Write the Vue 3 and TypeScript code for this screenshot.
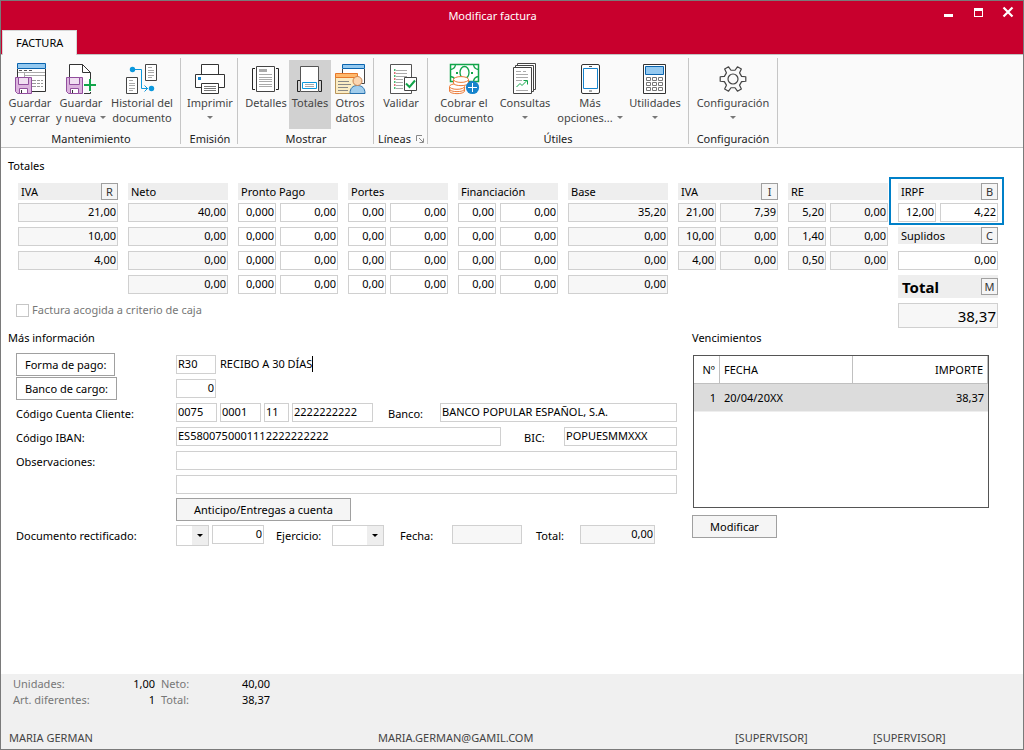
<script setup lang="ts">
import { ref } from 'vue'

interface RibbonItem {
  icon: string
  lines: string[]
  width: string
  arrow?: 'inline' | 'below'
  active?: boolean
}
interface RibbonGroup {
  title: string
  items: RibbonItem[]
  launcher?: boolean
}
interface TotalsColumn {
  title: string
  key?: string
  readonly: boolean
  rows: string[][]
}

const groups: RibbonGroup[] = [
  {
    title: 'Mantenimiento',
    items: [
      { icon: 'saveClose', lines: ['Guardar', 'y cerrar'], width: 'w50' },
      { icon: 'saveNew', lines: ['Guardar', 'y nueva'], width: 'w52', arrow: 'inline' },
      { icon: 'history', lines: ['Historial del', 'documento'], width: 'w70' },
    ],
  },
  { title: 'Emisión', items: [{ icon: 'printer', lines: ['Imprimir'], width: 'w54', arrow: 'below' }] },
  {
    title: 'Mostrar',
    items: [
      { icon: 'details', lines: ['Detalles'], width: 'w46' },
      { icon: 'totals', lines: ['Totales'], width: 'w42', active: true },
      { icon: 'other', lines: ['Otros', 'datos'], width: 'w38' },
    ],
  },
  { title: 'Líneas', launcher: true, items: [{ icon: 'validate', lines: ['Validar'], width: 'w50' }] },
  {
    title: 'Útiles',
    items: [
      { icon: 'cash', lines: ['Cobrar el', 'documento'], width: 'w64' },
      { icon: 'queries', lines: ['Consultas'], width: 'w58', arrow: 'below' },
      { icon: 'phone', lines: ['Más', 'opciones...'], width: 'w72', arrow: 'inline' },
      { icon: 'calculator', lines: ['Utilidades'], width: 'w58', arrow: 'below' },
    ],
  },
  { title: 'Configuración', items: [{ icon: 'gear', lines: ['Configuración'], width: 'w84', arrow: 'below' }] },
]

const pair = (a: string[]) => a.map((v) => [v, '0,00'])

const columns: TotalsColumn[] = [
  { title: 'IVA', key: 'R', readonly: true, rows: [['21,00'], ['10,00'], ['4,00']] },
  { title: 'Neto', readonly: true, rows: [['40,00'], ['0,00'], ['0,00'], ['0,00']] },
  { title: 'Pronto Pago', readonly: false, rows: pair(['0,000', '0,000', '0,000', '0,000']) },
  { title: 'Portes', readonly: false, rows: pair(['0,00', '0,00', '0,00', '0,00']) },
  { title: 'Financiación', readonly: false, rows: pair(['0,00', '0,00', '0,00', '0,00']) },
  { title: 'Base', readonly: true, rows: [['35,20'], ['0,00'], ['0,00'], ['0,00']] },
  { title: 'IVA', key: 'I', readonly: true, rows: [['21,00', '7,39'], ['10,00', '0,00'], ['4,00', '0,00']] },
  { title: 'RE', readonly: true, rows: pair(['5,20', '1,40', '0,50']) },
]

function gearPath(): string {
  const teeth = 6
  const profile: [number, number][] = [[-17, 9], [-10, 13], [10, 13], [17, 9]]
  const points: string[] = []
  for (let i = 0; i < teeth; i++) {
    for (const [offset, radius] of profile) {
      const a = ((i * 60 + offset) * Math.PI) / 180
      points.push(`${(16 + radius * Math.cos(a)).toFixed(2)} ${(16 + radius * Math.sin(a)).toFixed(2)}`)
    }
  }
  return `M${points.join('L')}Z`
}
const gear = gearPath()

const cashBasis = ref(false)
const payment = ref('R30')
const chargeBank = ref('0')
const account = ref(['0075', '0001', '11', '2222222222'])
const iban = ref('ES5800750001112222222222')
const bank = ref('BANCO POPULAR ESPAÑOL, S.A.')
const bic = ref('POPUESMMXXX')
const notes = ref(['', ''])
</script>

<template>
  <div class="window">
    <header class="titlebar">
      <div class="caption">
        <h1>Modificar factura</h1>
        <div class="controls">
          <button type="button" aria-label="Minimizar">
            <svg width="12" height="12" viewBox="0 0 12 12"><path d="M2 8H11V11H2Z" fill="#fff" /></svg>
          </button>
          <button type="button" aria-label="Maximizar">
            <svg width="12" height="12" viewBox="0 0 12 12"><path d="M2 2H11V11H2ZM3 5V10H10V5Z" fill="#fff" fill-rule="evenodd" /></svg>
          </button>
          <button type="button" aria-label="Cerrar">
            <svg width="12" height="12" viewBox="0 0 12 12"><path d="M1.500 1.500L10.500 10.500M10.500 1.500L1.500 10.500" stroke="#fff" stroke-width="2.200" /></svg>
          </button>
        </div>
      </div>
      <nav class="tabs"><button type="button" class="tab">FACTURA</button></nav>
    </header>

    <div class="ribbon">
      <section v-for="g in groups" :key="g.title" class="group">
        <div class="items">
          <button v-for="it in g.items" :key="it.icon" type="button" class="item" :class="[it.width, { active: it.active }]">
            <svg class="icon" width="32" height="32" viewBox="0 0 32 32" fill="none" aria-hidden="true">
              <template v-if="it.icon === 'saveClose'">
                <path d="M3.500 6V28.500H31.500V6" fill="#fff" stroke="#333" />
                <path d="M3.500.5H31.500V5.500H3.500Z" fill="#94c9f0" stroke="#0a64ae" />
                <path d="M5 7.500H8M10 7.500H13M15 7.500H18" stroke="#555" />
                <path d="M4 9.500H31M10.500 10V14M11 12.500H31" stroke="#aaa" />
                <path d="M18 17.500H22M23 17.500H26M27 17.500H29M18 20.500H22M23 20.500H26M27 20.500H29M18 23.500H22M23 23.500H26M27 23.500H29" stroke="#999" />
              </template>
              <template v-if="it.icon === 'saveNew'">
                <path d="M5 14V2H17.500L25 9.500V18H19V30H18V14Z" fill="#fff" />
                <path d="M4.500 14V1.500H17.500L25.500 9.500V16M25.500 29V30.500H19" stroke="#333" />
                <path d="M17.500 1.500V9.500H25.500" stroke="#333" />
                <path d="M25 16V28M19 22H31" stroke="#12a54a" stroke-width="2" />
              </template>
              <template v-if="it.icon === 'saveClose' || it.icon === 'saveNew'">
                <path d="M1.500 14.500H17.500V30.500H3.500L1.500 28.500Z" fill="#dcb4de" stroke="#924f9e" />
                <path d="M4.500 14.500H14.500V21.500H4.500Z" fill="#f1dff2" stroke="#924f9e" />
                <path d="M5.500 25.500H13.500V30.500H5.500Z" fill="#fff" stroke="#924f9e" />
                <path d="M7.500 27V30" stroke="#333" />
              </template>
              <template v-if="it.icon === 'history'">
                <path d="M19.500 1.500H30.500V17.500H19.500ZM.5 14.500H11.500V30.500H.5Z" fill="#fff" stroke="#444" />
                <path d="M22 4.500H26M22 7.500H28M22 9.500H28M22 12.500H28M22 14.500H26M3 17.500H7M3 20.500H9M3 22.500H9M3 25.500H9M3 27.500H7" stroke="#aaa" />
                <path d="M7 6.500H15.500V25.500H22M18.500 22.500L21.500 25.500L18.500 28.500" stroke="#0b98dd" />
                <circle cx="6.500" cy="6.500" r="2.700" fill="#0b98dd" /><circle cx="25.500" cy="25.500" r="2.700" fill="#0b98dd" />
              </template>
              <template v-if="it.icon === 'printer'">
                <path d="M7.500 1.500H24.500V12H7.500Z" fill="#fff" stroke="#333" />
                <path d="M1.500 11.500H30.500V24.500H1.500Z" fill="#fff" stroke="#333" />
                <path d="M7.500 20.500H24.500V30.500H7.500Z" fill="#fff" stroke="#333" />
                <path d="M10 23.500H22M10 25.500H22M10 27.500H22" stroke="#777" />
                <path d="M4 14H7V17H4Z" fill="#1583cc" />
              </template>
              <template v-if="it.icon === 'details'">
                <path d="M6.500 3.500H24.500V28.500H6.500Z" fill="#fff" stroke="#444" />
                <path d="M9 6H17V9H9Z" fill="#aaa" />
                <path d="M9 11.500H22M9 14.500H22M9 16.500H22M9 18.500H22M9 21.500H22M9 23.500H22" stroke="#aaa" />
                <path d="M5 5.500H2.500V26.500H5M26 5.500H28.500V26.500H26" stroke="#222" />
              </template>
              <template v-if="it.icon === 'totals'">
                <path d="M6.500 3.500H24.500V28.500H6.500Z" fill="#fff" stroke="#555" />
                <path d="M8.500 19.500H22.500V25.500H8.500Z" fill="#fff" stroke="#0b98dd" />
                <path d="M11 21.500H20M11 23.500H20" stroke="#aaa" />
                <path d="M6 17.500H3.500V28.500H6M25 17.500H27.500V28.500H25" stroke="#222" />
              </template>
              <template v-if="it.icon === 'other'">
                <path d="M8.500 6V20.500H30.500V6" fill="#fff" stroke="#444" />
                <path d="M8.500 1.500H30.500V5.500H8.500Z" fill="#94c9f0" stroke="#0a64ae" />
                <path d="M1.500 14V30.500H23.500V14" fill="#faecc4" stroke="#b8945a" />
                <path d="M1.500 10.500H23.500V14.500H1.500Z" fill="#ffb96c" stroke="#e7782a" />
                <path d="M4 18.500H15M4 21.500H17M4 24.500H14M4 27.500H14" stroke="#888" />
                <path d="M16 30.500C16 25 19 22.500 23.500 22.500S31 25 31 30.500Z" fill="#a1cdec" stroke="#2670ad" />
                <circle cx="23.500" cy="18" r="4.500" fill="#fbd6b1" stroke="#ca8451" />
              </template>
              <template v-if="it.icon === 'validate'">
                <path d="M5.500 1.500H26.500V30.500H5.500Z" fill="#fff" stroke="#555" />
                <path d="M11 7.500H22M11 10.500H22M11 13.500H22M11 16.500H18M11 19.500H18M11 22.500H18M11 25.500H18" stroke="#aaa" />
                <path d="M9 7H10.500M9 13H10.500M9 19H10.500M9 25H10.500" stroke="#12a54a" stroke-width="1.500" />
                <path d="M9 10H10.500M9 16H10.500M9 22H10.500" stroke="#d43d48" stroke-width="1.500" />
                <path d="M19.500 14.500H31.500V27.500H19.500Z" fill="#fff" stroke="#444" />
                <path d="M21 20.500L24.500 24L30 17.500" stroke="#12a54a" stroke-width="2" />
              </template>
              <template v-if="it.icon === 'cash'">
                <path d="M2.500 1.500H30.500V18.500H2.500Z" fill="#fff" stroke="#12a54a" stroke-width="1.500" />
                <path d="M2.500 6.500Q7 6 7.500 1.500M30.500 6.500Q26 6 25.500 1.500M30.500 13.500Q26 14 25.500 18.500M2.500 13.500Q6 14 6.500 16" stroke="#12a54a" stroke-width="1.300" />
                <ellipse cx="16.500" cy="9.500" rx="4.500" ry="6" stroke="#12a54a" stroke-width="1.300" />
                <path d="M8 9H10V11H8ZM23 9H25V11H23Z" fill="#12a54a" />
                <g fill="#fff" stroke="#ec7b39">
                  <path d="M1.500 24V28C1.500 31.500 16.500 31.500 16.500 28V24" />
                  <path d="M1.500 26C1.500 29.500 16.500 29.500 16.500 26" />
                  <ellipse cx="9" cy="23.500" rx="7.500" ry="2.800" />
                  <path d="M5.500 16.500V20C5.500 23.500 20.500 23.500 20.500 20V16.500" />
                  <ellipse cx="13" cy="16.500" rx="7.500" ry="2.900" />
                </g>
                <circle cx="24.500" cy="24.500" r="6.600" fill="#1583cc" />
                <path d="M24.500 20V29M20 24.500H29" stroke="#fff" />
              </template>
              <template v-if="it.icon === 'queries'">
                <g fill="#fff" stroke="#444">
                  <path d="M8.500.5H26.500V26.500H8.500Z" />
                  <path d="M6.500 2.500H24.500V28.500H6.500Z" />
                  <path d="M4.500 4.500H22.500V30.500H4.500Z" />
                </g>
                <path d="M7 8.500H12M14 8.500H17M7 11.500H19M7 14.500H19M7 17.500H13M7 27.500H19" stroke="#aaa" />
                <path d="M7.500 24L11 20.500L13 22.500L17.500 18M14.500 17.500H18.500V21.500" stroke="#12a54a" />
              </template>
              <template v-if="it.icon === 'phone'">
                <rect x="7.500" y="1.500" width="18" height="29" rx="1.500" fill="#fff" stroke="#333" />
                <path d="M9.500 5.500H23.500V25.500H9.500Z" fill="#fff" stroke="#1583cc" />
                <path d="M15 3.500H18M15 28H18" stroke="#555" />
              </template>
              <template v-if="it.icon === 'calculator'">
                <path d="M4.500 1.500H26.500V30.500H4.500Z" fill="#fff" stroke="#333" />
                <path d="M6.500 3.500H24.500V11.500H6.500Z" fill="#94c9f0" stroke="#0a64ae" />
                <path v-for="n in 9" :key="n" :d="`M${7.5 + ((n - 1) % 3) * 6} ${14.5 + Math.floor((n - 1) / 3) * 5}h4v3h-4z`" stroke="#777" />
              </template>
              <template v-if="it.icon === 'gear'">
                <path :d="gear" stroke="#444" stroke-width="1.200" stroke-linejoin="round" />
                <circle cx="16" cy="16" r="5" stroke="#444" stroke-width="1.200" />
              </template>
            </svg>
            <span v-for="(l, i) in it.lines" :key="l" class="line">{{ l }}<i v-if="it.arrow === 'inline' && i === 1" class="caret inline"></i></span>
            <span v-if="it.arrow === 'below'" class="line"><i class="caret"></i></span>
          </button>
        </div>
        <div class="group-title">
          {{ g.title }}
          <svg v-if="g.launcher" width="8" height="8" viewBox="0 0 8 8" fill="none"><path d="M.5 6V.5H6M3 3L7 7M7.500 3.500V7.500H3.500" stroke="#888" /></svg>
        </div>
      </section>
    </div>

    <main class="body">
      <h2>Totales</h2>
      <div class="totals">
        <div v-for="(c, ci) in columns" :key="ci" class="col">
          <div class="head"><span>{{ c.title }}</span><button v-if="c.key" type="button" class="key">{{ c.key }}</button></div>
          <div v-for="(r, ri) in c.rows" :key="ri" class="cells" :class="{ double: r.length === 2 }">
            <input v-for="(v, vi) in r" :key="vi" class="field num" type="text" :value="v" :readonly="c.readonly" :aria-label="`${c.title} ${ri + 1}`" />
          </div>
        </div>
        <div class="col">
          <div class="irpf">
            <div class="head"><span>IRPF</span><button type="button" class="key">B</button></div>
            <div class="cells double">
              <input class="field num" type="text" value="12,00" aria-label="Porcentaje IRPF" />
              <input class="field num" type="text" value="4,22" aria-label="Importe IRPF" />
            </div>
          </div>
          <div class="head spaced"><label for="suplidos">Suplidos</label><button type="button" class="key">C</button></div>
          <div class="cells"><input id="suplidos" class="field num" type="text" value="0,00" /></div>
          <div class="head grand"><label for="total">Total</label><button type="button" class="key">M</button></div>
          <input id="total" class="field num grand-value" type="text" value="38,37" readonly />
        </div>
        <label class="check"><input v-model="cashBasis" type="checkbox" />Factura acogida a criterio de caja</label>
      </div>

      <div class="lower">
        <section>
          <h2>Más información</h2>
          <div class="form">
            <div class="row">
              <div class="lead"><button type="button" class="btn plain">Forma de pago:</button></div>
              <input v-model="payment" class="field f40" type="text" aria-label="Forma de pago" />
              <span class="typed">RECIBO A 30 DÍAS</span>
            </div>
            <div class="row">
              <div class="lead"><button type="button" class="btn plain">Banco de cargo:</button></div>
              <input v-model="chargeBank" class="field num f40" type="text" aria-label="Banco de cargo" />
            </div>
            <div class="row">
              <label class="lead" for="ccc">Código Cuenta Cliente:</label>
              <div class="split grow">
                <input id="ccc" v-model="account[0]" class="field f41" type="text" />
                <input v-model="account[1]" class="field f41" type="text" aria-label="Oficina" />
                <input v-model="account[2]" class="field f25" type="text" aria-label="Dígito de control" />
                <input v-model="account[3]" class="field f81" type="text" aria-label="Número de cuenta" />
              </div>
              <label class="bank-label" for="bank">Banco:</label>
              <input id="bank" v-model="bank" class="field f237" type="text" />
            </div>
            <div class="row">
              <label class="lead" for="iban">Código IBAN:</label>
              <input id="iban" v-model="iban" class="field grow" type="text" />
              <label class="bic-label" for="bic">BIC:</label>
              <input id="bic" v-model="bic" class="field f113" type="text" />
            </div>
            <div class="row">
              <label class="lead" for="obs">Observaciones:</label>
              <input id="obs" v-model="notes[0]" class="field grow" type="text" />
            </div>
            <div class="row">
              <div class="lead"></div>
              <input v-model="notes[1]" class="field grow" type="text" aria-label="Observaciones, segunda línea" />
            </div>
            <div class="row tall">
              <div class="lead"></div>
              <button type="button" class="btn wide">Anticipo/Entregas a cuenta</button>
            </div>
            <div class="row">
              <label class="lead" for="serie">Documento rectificado:</label>
              <span class="select f33"><select id="serie"><option></option></select></span>
              <input class="field num f52" type="text" value="0" aria-label="Número de documento" />
              <label class="inline-label" for="ejercicio">Ejercicio:</label>
              <span class="select f52"><select id="ejercicio"><option></option></select></span>
              <label class="date-label" for="fecha">Fecha:</label>
              <input id="fecha" class="field f70" type="text" readonly />
              <label class="total-label" for="rect-total">Total:</label>
              <input id="rect-total" class="field num f75" type="text" value="0,00" readonly />
            </div>
          </div>
        </section>

        <section>
          <h2>Vencimientos</h2>
          <div class="due">
            <table>
              <thead><tr><th class="n">Nº</th><th class="d">FECHA</th><th class="r">IMPORTE</th></tr></thead>
              <tbody><tr><td class="n">1</td><td>20/04/20XX</td><td class="r">38,37</td></tr></tbody>
            </table>
          </div>
          <button type="button" class="btn modify">Modificar</button>
        </section>
      </div>
    </main>

    <footer class="footer">
      <dl class="summary">
        <dt>Unidades:</dt><dd>1,00</dd><dt>Neto:</dt><dd>40,00</dd>
        <dt>Art. diferentes:</dt><dd>1</dd><dt>Total:</dt><dd>38,37</dd>
      </dl>
      <div class="status">
        <span>MARIA GERMAN</span><span>MARIA.GERMAN@GAMIL.COM</span><span>[SUPERVISOR]</span><span>[SUPERVISOR]</span>
      </div>
    </footer>
  </div>
</template>

<style>
body { margin: 0; }
</style>

<style scoped>
* { box-sizing: border-box; }
.window {
  display: flex;
  flex-direction: column;
  min-height: 100vh;
  border: 1px solid #7a7a7a;
  background: #fff;
  color: #000;
  font: 11px/16px "Noto Sans", "Open Sans", sans-serif;
}
button, input, select { margin: 0; font: inherit; color: inherit; border-radius: 0; outline: none; }
h1, h2 { margin: 0; font-size: inherit; font-weight: 400; }
svg { display: block; }

.titlebar { background: #c8002d; border-bottom: 1px solid #c3c3c3; }
.caption { display: flex; height: 29px; padding-left: 42px; }
.caption h1 { flex: 1; align-self: center; color: #fff; text-align: center; }
.controls { display: flex; gap: 18px; padding: 5px 9px 0 0; }
.controls button { width: 12px; height: 12px; padding: 0; border: 0; background: none; }
.tabs { height: 24px; padding-left: 1px; }
.tab { position: relative; display: block; height: 25px; padding: 0 13px; border: 1px solid #d6d6d6; border-bottom: 0; background: #fafafa; }

.ribbon { display: flex; height: 93px; background: #fafafa; border-bottom: 1px solid #c3c3c3; }
.group { position: relative; display: flex; flex-direction: column; padding: 5px 5px 0; }
.group::after { content: ""; position: absolute; right: 0; top: 3px; bottom: 3px; width: 1px; background: #c6c6c6; }
.group:nth-child(1) { padding-left: 4px; padding-right: 4px; }
.group:nth-child(2) { padding-left: 2px; padding-right: 1px; }
.group:nth-child(4) { padding-left: 2px; padding-right: 2px; }
.group:nth-child(5) { padding-left: 4px; }
.group:nth-child(6) { padding-left: 2px; padding-right: 3px; }
.items { display: flex; flex: none; height: 69px; }
.item {
  display: flex; flex-direction: column; align-items: center;
  padding: 3px 0 0; border: 0; background: none; color: #444; line-height: 15px; white-space: nowrap;
}
.item.active { background: #d1d1d1; }
.icon { flex: none; }
.line { display: flex; align-items: center; justify-content: center; height: 15px; }
.w38 { width: 38px; } .w42 { width: 42px; } .w46 { width: 46px; } .w50 { width: 50px; } .w52 { width: 52px; } .w54 { width: 54px; }
.w58 { width: 58px; } .w64 { width: 64px; } .w70 { width: 70px; } .w72 { width: 72px; } .w84 { width: 84px; }
.caret { width: 0; height: 0; border: 3px solid transparent; border-top-color: #777; border-bottom: 0; }
.caret.inline { margin-left: 4px; }
.group-title { display: flex; flex: none; justify-content: center; align-items: center; gap: 5px; height: 18px; padding-top: 2px; color: #222; }

.body { flex: 1; padding: 10px 0 20px; }
.body h2 { padding-left: 7px; }
.totals {
  position: relative;
  display: grid; grid-template-columns: repeat(9, minmax(0, 1fr)); column-gap: 10px;
  padding: 9px 25px 0 17px;
}
.head { display: flex; align-items: center; justify-content: space-between; height: 17px; padding-left: 3px; margin-bottom: 3px; background: #eee; }
.key { width: 17px; height: 17px; padding: 0; border: 1px solid #a0a0a0; background: #f5f5f5; color: #333; line-height: 15px; }
.cells { display: grid; gap: 4px; margin-bottom: 5px; }
.cells.double { grid-template-columns: minmax(0, 38fr) minmax(0, 58fr); }
.field { min-width: 0; height: 19px; padding: 0 1px 2px; border: 1px solid #d0d0d0; background: #fff; }
.cells .field { width: 100%; }
.field[readonly] { background: #f7f7f7; }
.num { text-align: right; }
.irpf { position: relative; }
.irpf::after { content: ""; position: absolute; inset: -6px -6px -3px -9px; border: 2px solid #0080c8; pointer-events: none; }
.spaced { margin-bottom: 7px; }
.grand { height: 23px; margin-bottom: 5px; padding-left: 4px; font-size: 15px; font-weight: 700; }
.grand .key { font-size: 11px; font-weight: 400; }
.grand-value { width: 100%; height: 25px; padding: 0 1px; font-size: 15px; }
.check { position: absolute; left: 15px; bottom: 10px; display: flex; align-items: center; gap: 3px; color: #777; }
.check input { appearance: none; width: 13px; height: 13px; border: 1px solid #c6c6c6; background: #fff; }
.check input:checked { background: #777; }

.lower { display: grid; grid-template-columns: minmax(0, 661fr) minmax(0, 297fr); column-gap: 15px; padding: 2px 34px 0 15px; }
.lower h2 { padding-left: 0; }
.lower section:first-child h2 { margin-left: -8px; }
.form { display: flex; flex-direction: column; padding-top: 9px; }
.row { display: flex; align-items: flex-start; height: 24px; }
.row.tall { height: 26px; }
.row > label { padding-top: 3px; white-space: nowrap; }
.row .lead { flex: none; width: 160px; }
.row div.lead { margin-top: -2px; }
.btn { height: 23px; padding: 0 8px; border: 1px solid #a0a0a0; background: #f5f5f5; white-space: nowrap; }
.btn.plain { background: #fff; }
.btn.wide { width: 175px; margin-top: -1px; }
.btn.modify { width: 85px; margin-top: 7px; }
.grow { flex: 1; }
.split { display: flex; gap: 3px; }
.typed { margin: 1px 0 0 4px; height: 16px; border-right: 1px solid #000; line-height: 16px; }
.bank-label { width: 52px; }
.bic-label { width: 63px; padding-left: 23px; }
.inline-label { width: 68px; padding-left: 12px; }
.date-label { width: 68px; padding-left: 16px; }
.total-label { width: 58px; padding-left: 14px; }
.f25 { width: 25px; } .f33 { width: 33px; margin-right: 3px; } .f40 { width: 40px; } .f41 { width: 41px; }
.f52 { width: 52px; } .f70 { width: 70px; } .f75 { width: 75px; } .f81 { width: 81px; }
.f113 { width: 113px; } .f237 { width: 237px; }
.select { position: relative; flex: none; height: 21px; }
.select select {
  appearance: none; width: 100%; height: 100%; padding: 0 17px 0 2px; border: 1px solid #d0d0d0;
  background: linear-gradient(#eee, #eee) right / 16px 100% no-repeat #fff;
}
.select::after {
  content: ""; position: absolute; right: 6px; top: 9px;
  border: 3px solid transparent; border-top-color: #000; border-bottom: 0; pointer-events: none;
}

.due { height: 153px; margin: 9px 0 0 1px; border: 1px solid #555; }
table { width: 100%; border-collapse: separate; border-spacing: 0; table-layout: fixed; }
th, td { padding: 0 4px; text-align: left; font-weight: 400; line-height: 16px; }
th { height: 28px; border-bottom: 1px solid #c0c0c0; border-right: 1px solid #c0c0c0; }
td { height: 28px; background: #dcdcdc; border-bottom: 1px solid #eee; }
th.n { width: 26px; }
th.d { width: 133px; }
.n, .r { text-align: right; }

.footer { display: flex; flex-direction: column; justify-content: space-between; height: 75px; padding: 2px 0 3px; background: #f0f0f0; }
.summary { display: grid; grid-template-columns: 92px 50px 59px 56px; margin: 0 0 0 12px; }
.summary dt { color: #777; white-space: nowrap; }
.summary dt:nth-of-type(even) { padding-left: 6px; }
.summary dd { margin: 0; text-align: right; }
.status { display: grid; grid-template-columns: 369fr 357fr 138fr 150fr; padding-left: 8px; color: #444; }
</style>
